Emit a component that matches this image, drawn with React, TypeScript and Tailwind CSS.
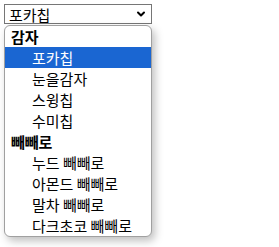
import { ChevronDown } from 'lucide-react';

const groups = [
  { label: '감자', items: ['포카칩', '눈을감자', '스윙칩', '수미칩'] },
  { label: '빼빼로', items: ['누드 빼빼로', '아몬드 빼빼로', '말차 빼빼로', '다크초코 빼빼로'] },
];

const selected = '포카칩';

export default function App() {
  return (
    <div
      className="min-h-[247px] w-[279px] bg-white text-black"
      style={{ fontFamily: '"Noto Sans CJK KR", "Noto Sans", sans-serif' }}
    >
      <div className="pl-1 pt-1">
        {/* closed select */}
        <div className="flex h-[20px] w-[148px] items-center justify-between border border-[#767676] pl-[4px] pr-[4px] text-[15px] leading-none">
          <span>{selected}</span>
          <ChevronDown size={12} strokeWidth={4} />
        </div>

        {/* open list */}
        <div className="mt-[1px] w-[148px] overflow-hidden rounded-[6px] border border-[#a0a0a0] bg-white shadow-[3px_4px_8px_rgba(0,0,0,0.25)]">
          {groups.map((g) => (
            <div key={g.label}>
              <div className="flex h-[21px] items-center pl-[6px] text-[15px] font-bold leading-none">
                {g.label}
              </div>
              {g.items.map((it) => (
                <div
                  key={it}
                  className={`flex h-[21px] items-center pl-[27px] text-[15px] leading-none ${
                    it === selected ? 'bg-[#1a66d2] text-white' : ''
                  }`}
                >
                  {it}
                </div>
              ))}
            </div>
          ))}
        </div>
      </div>
    </div>
  );
}
